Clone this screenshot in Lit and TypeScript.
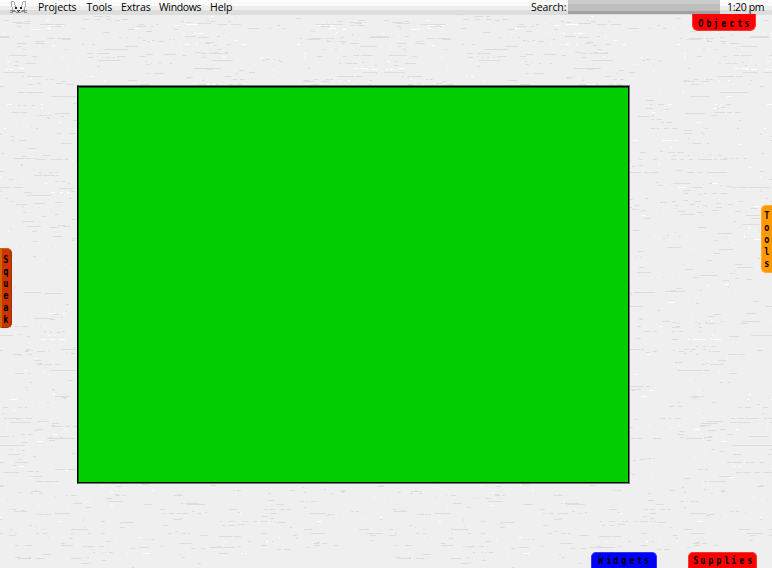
import { LitElement, html, css, svg } from "lit";
import { customElement, property } from "lit/decorators.js";

type Patch = { ox: number; oy: number; gray: string; white: string };

// Fibres of the paper tile: "x y length" on a grid three times finer than the screen.
const PATCHES: Patch[] = [
  { ox: 0, oy: 14,
    gray: "12 19 16,36 25 33,72 22 18,48 28 42,120 31 75,153 37 33,51 37 12,60 43 4,141 49 4,0 67 27,0 70 27,39 67 3,75 67 12,141 73 24,174 73 39,186 76 27,108 82 21,129 79 4,51 88 27,105 88 30,54 97 9,15 97 3,69 106 9,195 106 6,27 124 54,96 127 15,45 142 9,219 142 3,75 148 33,163 142 3,42 154 12,12 175 63,66 187 6,81 187 45,138 196 6,150 196 8,84 211 15,111 208 12,186 202 12,168 208 18,201 211 21,0 217 12,235 4 3,249 16 18,243 43 15,282 7 27,318 7 12,285 16 15,318 16 15,345 19 15,366 16 18,309 55 21,327 37 3,357 70 6,384 46 21,381 70 3,399 70 3,414 70 6,375 97 39,312 106 72,276 91 9,246 91 6,261 118 18,291 118 39,264 130 15,291 127 4,306 130 3,321 130 9,339 130 6,351 127 27,297 139 63,291 157 9,420 127 18,438 121 21,435 142 6,453 148 3,438 151 9,477 148 7,510 148 6,438 178 9,462 178 30,384 199 27,417 31 15,411 37 27,453 37 9,468 31 9,438 52 18,429 79 9,441 82 9,456 79 9,474 82 18,507 76 3,519 76 6,522 46 12,555 67 33,594 70 33,543 22 9,558 25 16,594 28 39,621 19 6,633 22 15,651 31 30,684 22 9,693 31 30,705 10 3,651 67 9,666 58 3,744 43 33,618 85 24,615 88 15,639 94 12,678 91 15,651 106 15,585 115 18,603 118 18,627 118 57,642 115 12,675 115 9,492 121 36,546 124 12,606 130 12,636 139 63,582 163 81,621 166 18,558 190 21,561 193 6,606 199 6,609 193 3,675 187 18,708 178 6,717 169 15,747 175 18,699 196 12,720 196 12,420 211 30,597 211 21,648 211 6,687 211 12,711 211 15",
    white: "138 19 9,144 34 21,183 34 9,93 46 27,141 43 12,9 58 6,33 58 3,156 94 9,33 130 3,21 142 9,183 130 6,57 163 15,18 166 6,30 166 9,201 166 3,90 193 6,162 208 3,258 187 4,273 187 9,312 199 3,405 43 9,417 43 3,402 109 3,420 94 3,495 28 3,525 34 12,557 31 37,549 58 6,582 58 7,594 58 15,513 91 3,540 91 3,555 91 11,588 91 6,543 112 3,633 7 9,675 67 3,702 79 9,726 91 12,669 127 6,762 151 3,774 151 3,621 211 9,639 211 6" },
  { ox: 260, oy: 14,
    gray: "108 13 15,51 34 9,27 43 6,69 43 9,114 43 3,153 52 12,168 31 81,180 37 30,201 25 3,213 25 3,231 22 18,270 25 15,288 25 18,282 28 24,294 19 21,315 25 6,270 34 15,294 34 18,315 40 3,120 73 6,147 73 42,141 76 39,198 73 9,210 73 12,201 79 6,201 82 15,240 82 18,240 70 12,276 61 3,276 64 3,294 64 3,246 88 9,270 88 27,327 70 33,333 67 27,189 106 6,225 106 6,288 103 3,300 97 51,171 127 15,249 127 12,282 124 15,303 124 33,18 136 12,42 136 3,6 139 9,54 139 6,60 142 6,39 154 3,144 163 6,237 148 6,258 148 18,279 148 12,306 145 6,315 154 6,345 154 6,309 175 42,348 178 3,231 187 24,258 187 24,288 187 6,297 187 6,147 193 3,132 199 15,183 202 24,201 196 6,210 196 9,255 199 3,330 199 6,153 211 24,279 211 3,327 211 6",
    white: "174 34 12,195 34 6,210 34 12,207 43 21,246 46 12,228 55 6,225 61 3,111 91 9,132 118 6,3 130 6,132 130 6,333 142 3,39 166 3,285 163 9,303 163 21,318 166 9,333 166 18,39 187 3,237 199 3" },
  { ox: 0, oy: 85,
    gray: "54 22 21,78 22 51,93 26 3,156 34 75,183 43 3,198 54 3,54 61 9,69 61 9,96 61 9,219 56 12,36 82 21,60 82 21,39 79 3,165 85 45,111 91 6,120 91 9,132 91 9,147 91 6,141 97 6,144 100 6,183 94 9,219 106 12,57 121 3,93 124 3,108 130 6,0 145 3,0 148 6,171 145 12,207 145 21,213 136 6,33 154 9,33 166 9,57 166 21,183 175 33,84 190 24,3 205 9,129 211 24,66 214 15,42 220 33,78 220 15,99 220 12,111 223 24,153 223 36,195 223 9,198 220 3,57 238 12,63 241 6,0 259 12,114 262 12,147 262 12,165 262 9,102 271 24,129 271 36,168 271 9,27 283 12,51 289 3,165 289 9,183 289 12,204 295 6,0 307 30,39 307 30,177 310 42,0 319 3,72 322 18,90 325 6,213 319 9,195 322 9,81 331 72,18 340 6,144 343 3,207 340 9,165 352 24,33 349 9,105 355 30",
    white: "21 58 15,123 58 6,123 70 6,177 112 6,12 130 6,216 226 3,57 238 3,0 274 3,135 295 6,153 322 12,180 322 9,198 322 9" },
  { ox: 230, oy: 14,
    gray: "108 259 24,120 271 6,144 271 18,108 283 21,84 307 33,123 304 9,153 289 3,162 286 15,123 316 12,141 316 15,153 325 9,168 325 18,123 343 12,141 343 6,162 343 12,186 343 18,222 349 24,222 358 24,234 373 6,246 388 27,291 388 6,240 247 60,330 235 84,219 202 36,252 196 12,288 196 9,225 298 60,303 304 18,315 295 30,351 295 15,375 295 15,321 283 6,333 280 15,348 271 15,285 343 9,273 355 6,279 361 6,381 343 6,387 319 6,321 187 51,378 187 21,90 415 18,150 412 9,174 415 21,201 415 21,186 424 12,60 439 3,87 436 12,129 436 12,183 436 15,210 436 12,237 436 12,264 436 42,312 436 9,330 436 21,342 433 12,363 433 9,378 433 6,402 433 9,234 424 6,279 418 3,297 421 6,324 424 12,66 457 9,87 454 12,60 475 33,102 475 15,123 475 21,231 475 21,264 475 12,291 475 60,198 469 18,189 508 51,138 505 6,144 514 15,219 529 24,246 520 30,279 511 3,297 508 9,330 514 6,351 517 15,366 520 15,387 520 24,417 520 60,105 553 9,150 565 21,186 562 12,222 559 12,255 562 18,222 538 12,264 541 9,282 538 9,306 538 15,333 538 18,195 574 9,240 571 15,261 577 6,279 574 12,318 568 15,354 571 15,384 562 15,60 556 9,75 574 12,93 589 15,204 592 24,261 595 18,306 589 21,375 592 18",
    white: "147 235 3,216 235 6,174 271 12,315 271 6,333 271 3,351 247 15,126 295 12,162 289 3,309 283 12,345 283 3,261 325 9,273 325 3,69 379 15,156 379 30,195 379 9,180 400 6,144 451 6,204 520 21,165 511 3,306 508 18,333 511 3,417 460 6,387 391 9,156 532 3,327 556 3,354 199 6,369 211 3" },
  { ox: 220, oy: 320,
    gray: "216 7 15,234 10 6,285 7 6,294 10 9,315 7 6,318 10 27,363 4 6,426 4 88,420 10 24,111 19 12,132 34 18,160 34 12,216 22 24,216 34 9,237 34 12,297 22 9,297 34 6,345 34 3,108 55 15,216 58 18,387 49 30,453 46 60,270 70 3,288 79 6,309 79 9,336 79 12,90 88 30,123 88 9,252 88 15,273 88 15,309 88 9,138 97 12,159 94 12,219 91 6,237 94 15,252 100 9,270 94 6,327 94 6,336 94 24,288 103 6,384 103 27,414 103 21,471 91 18,354 121 24,225 127 9,237 127 9,318 130 6,306 133 9,330 133 24,357 133 15,234 151 75,312 151 18,387 160 24,285 178 3,360 187 9,384 187 6,90 199 39,138 199 12,93 208 30,96 211 9,309 211 3,273 229 30,279 232 12,282 235 3,305 229 6,234 247 6,336 247 12,207 259 15,217 256 3,234 259 12,309 280 3,417 262 9,435 262 18,471 253 15,180 295 18,207 295 6,225 295 18,321 304 48,303 310 51,300 316 30,300 319 15,393 295 12,411 295 21,435 295 42,390 307 60,105 298 9,162 316 3,195 322 3,90 322 9,360 328 18,237 334 15,234 343 18,240 352 9,258 355 48,312 352 24,324 349 12,321 361 12,324 331 24,381 343 18,447 349 60,93 355 12,108 355 18,159 355 24,396 376 120,336 388 9,330 400 3,360 394 12,378 403 3,399 403 24,99 421 9,120 418 18,141 415 12,159 415 6,267 412 3,381 427 12,396 427 30,438 427 9,450 427 12,294 448 15,315 448 9,90 457 3,96 463 9,252 475 18,312 484 9,327 484 24,357 469 39,354 484 24,408 457 18,429 457 24,462 457 27,471 499 18,39 511 6,51 511 12,144 520 9,210 511 15,246 502 6,252 517 6,312 508 6,333 520 6,363 511 12,363 514 12,366 517 6,144 541 18,168 553 24,240 544 12,261 544 3,273 544 12,288 544 6,27 568 24,132 568 12,150 568 15,180 568 15,201 568 12,252 562 6,393 574 9,408 574 9,54 577 6,126 589 15,150 580 18,270 580 48,324 583 18,318 586 9,360 589 3,435 577 3,0 604 6,27 604 15,45 604 3,66 604 6,75 604 9,102 604 9,120 604 24,150 595 12,153 604 3,162 604 6,171 607 27,6 616 9,33 616 12,54 613 18,123 640 18,210 622 6,252 628 24,273 640 42,219 646 12,417 628 33,441 640 48,450 646 18,0 649 36,42 649 21,84 664 9,132 664 6,156 664 6,279 670 18,288 667 12,306 670 15,228 655 6,450 661 9,0 682 45,54 679 9,123 676 18,171 688 12,192 688 18,261 682 9,282 676 18,342 676 12",
    white: "177 19 9,306 19 3,336 46 3,264 58 6,279 58 36,333 55 3,339 58 24,396 67 3,435 55 3,141 103 12,381 115 3,126 139 3,222 139 3,234 139 3,105 163 9,357 157 3,126 187 3,150 211 9,123 229 18,294 223 6,444 223 9,441 238 6,282 328 18,234 316 3,303 340 3,321 340 3,345 340 3,408 328 9,366 364 15,399 439 6,417 439 6,387 472 12,156 460 3,162 499 3,309 496 3,321 496 3,459 532 6,60 580 6,291 604 15,15 664 6,135 664 9,177 652 3,231 661 3" },
  { ox: 0, oy: 330,
    gray: "0 16 39,57 13 9,80 19 9,132 4 6,150 7 6,171 7 12,186 4 9,0 61 9,78 58 12,78 61 9,75 64 12,93 61 6,111 64 24,144 64 3,39 73 24,60 76 6,84 73 12,183 58 45,201 67 3,213 70 12,219 52 9,102 91 21,108 100 18,114 103 15,135 103 21,165 103 9,177 103 6,45 130 27,84 130 9,153 121 78,90 157 6,75 172 6,81 181 3,204 151 15,156 178 6,159 181 6,165 199 45,186 202 15,192 205 6,105 217 3,141 217 6,9 232 15,54 232 9,75 232 6,6 250 6,12 265 9,24 265 45,48 268 9,75 265 21,126 265 3,30 277 63,114 274 33,156 280 21,153 286 12,153 289 24,171 289 18,198 289 12,219 289 12,102 301 9,111 298 18,63 313 12,84 313 15,0 319 27,39 319 3,63 337 21,147 322 12,141 325 84,177 322 12,147 331 18,0 346 75,27 358 12,66 361 9,99 379 9,24 373 36,54 388 12,0 397 12,45 397 39,39 406 9,12 427 45,84 424 18,108 424 9,87 439 39,108 454 21,135 454 24,162 454 15,216 370 9,165 418 30,201 418 27,0 466 9,0 469 12,54 487 9,93 484 33,90 490 9,117 490 12,105 481 6,165 499 3,198 496 3,213 496 6,219 520 27,21 508 3,36 538 12,42 544 39,64 541 9,99 526 3,111 553 6,120 553 12,135 553 9,147 553 6,165 550 45,0 568 6,87 586 9,105 592 3,27 598 12,129 598 6,213 598 51,0 610 9,45 610 6,108 610 9,129 610 12,213 610 6,27 616 21,144 622 3,183 640 12,45 646 9,75 646 21,183 646 36,87 655 3,129 673 24,45 682 15,54 685 39,87 682 6,108 685 24,213 685 9,219 685 24,243 700 24",
    white: "144 16 3,165 16 3,123 28 15,150 28 14,177 28 18,87 37 3,198 52 3,105 85 9,75 121 6,129 127 6,144 133 3,39 193 3,33 208 18,39 241 6,159 193 6,21 298 3,147 295 3,159 313 12,192 298 6,111 334 18,57 409 15,33 415 3,90 442 9,198 421 6,162 466 3,201 538 3,0 562 6,174 574 9" },
  { ox: 60, oy: 460,
    gray: "168 79 15,246 73 21,33 106 15,165 103 12,165 106 15,186 106 9,102 115 3,114 115 3,138 115 18,144 124 45,39 130 27,78 142 15,252 133 24,342 106 27,354 103 9,375 130 42,381 133 54,363 130 6,300 148 15,309 160 6,327 160 15,351 160 33,396 154 9,414 160 9,435 157 6,507 148 24,519 91 6,531 91 12,450 76 18,69 178 3,69 181 3,123 184 12,183 187 39,180 190 6,33 208 51,72 199 3,180 202 15,84 220 9,123 220 12,27 235 12,309 196 15,342 178 21,360 175 9,345 214 9,324 220 12,363 220 15,384 220 6,138 244 15,69 259 9,81 259 24,117 259 15,141 259 3,90 262 3,98 277 6,126 277 3,135 277 3,147 277 12,255 238 3,264 238 3,276 238 6,237 262 30,303 259 6,213 265 12,360 250 36,420 226 24,393 265 12,423 265 15,450 262 75,471 259 12,477 280 27,39 295 24,63 310 24,126 301 12,90 307 3,81 292 6,216 322 6,357 283 6,366 292 9,414 310 9,477 229 12,519 229 24,534 193 21,486 196 9,507 196 12",
    white: "123 76 6,240 76 3,153 97 6,276 91 6,78 124 3,150 136 9,168 238 3,237 232 9,248 280 22,201 280 3,290 280 4,438 283 3,495 244 6,540 160 6,546 280 3,555 280 6" },
];

// Stretch between the traced bands, sprinkled evenly by a small generator.
function sprinkle(): { gray: string; white: string } {
  let seed = 7321;
  const next = () => (seed = (seed * 16807) % 2147483647) / 2147483647;
  let gray = "", white = "";
  for (let i = 0; i < 310; i++) {
    const x = Math.floor(next() * 380);
    const y = 204 + Math.floor(next() * 124);
    const n = next();
    const w = n < 0.35 ? 1 : n < 0.85 ? 2 + Math.floor(next() * 7) : 9 + Math.floor(next() * 14);
    if (next() < 0.14) white += `M${x} ${y}h${Math.min(w, 7)}v1h-${Math.min(w, 7)}z`;
    else gray += `M${x} ${y}h${w}v1h-${w}z`;
  }
  return { gray, white };
}

function trace(p: Patch, list: string): string {
  return list.split(",").map((s) => {
    const [x, y, w] = s.split(" ").map(Number);
    const px = p.ox + Math.round(x / 3);
    const py = p.oy + Math.floor(y / 3);
    const pw = Math.max(1, Math.round(w / 3));
    return px >= 380 ? "" : `M${px} ${py}h${pw}v1h-${pw}z`;
  }).join("");
}

const extra = sprinkle();
const GRAY = PATCHES.map((p) => trace(p, p.gray)).join("") + extra.gray;
const WHITE = PATCHES.map((p) => trace(p, p.white)).join("") + extra.white;

@customElement("paper-sheet")
export class PaperSheet extends LitElement {
  static styles = css`
    :host { display: block; }
    svg { display: block; width: 100%; height: 100%; }
  `;
  render() {
    return html`<svg width="772" height="568" shape-rendering="crispEdges">
      ${svg`<defs><pattern id="tile" width="380" height="568" patternUnits="userSpaceOnUse">
        <path d=${GRAY} fill="#dddddd"></path><path d=${WHITE} fill="#fff"></path>
      </pattern></defs>
      <rect width="772" height="568" fill="#efefef"></rect>
      <rect width="772" height="568" fill="url(#tile)"></rect>`}
    </svg>`;
  }
}

@customElement("flap-tab")
export class FlapTab extends LitElement {
  @property() label = "";
  static styles = css`
    :host {
      display: flex; box-sizing: border-box; justify-content: center; align-items: center;
      font: bold 10px/12px "DejaVu Sans Mono", monospace; color: #000;
    }
    .letter { display: block; width: 7.7px; text-align: center; transform: scaleX(0.85); }
    :host([upright]) { flex-direction: column; }
    :host([upright]) .letter { height: 12px; }
  `;
  render() {
    return [...this.label].map((c) => html`<span class="letter">${c}</span>`);
  }
}

@customElement("app-root")
export class AppRoot extends LitElement {
  static styles = css`
    :host {
      display: block; position: relative; width: 772px; height: 568px; overflow: hidden;
      font: 10.5px/14px "Open Sans", "Noto Sans", sans-serif; color: #000;
    }
    .paper { position: absolute; inset: 0; }
    .bar {
      position: relative; display: flex; box-sizing: border-box; height: 15px; padding-left: 9px;
      background: linear-gradient(#fbfbfb 0 6px, #eeeeee 6px 10px, #dddddd 10px 15px);
    }
    .mouse { width: 19px; height: 14px; margin-right: 10px; flex: none; }
    .menu { white-space: nowrap; flex: none; letter-spacing: -0.1px; }
    .projects { width: 48.5px; }
    .tools { width: 34.5px; }
    .extras { width: 38px; }
    .windows { width: 51px; letter-spacing: -0.35px; }
    .help { flex: 1; }
    .search { width: 37px; }
    .field {
      width: 152px; height: 14px; flex: none;
      background: linear-gradient(#cccccc 0 4px, #bebebe 4px 11px, #a2a2a2 11px 14px);
    }
    .clock { width: 45px; margin-left: 7px; letter-spacing: -0.35px; }
    .project {
      position: absolute; left: 77px; top: 85px; width: 553px; height: 399px; box-sizing: border-box;
      background: #00ce00; border: 1px solid #777; border-left-color: #000;
      box-shadow: inset 0 1px #000, inset -1px -1px #000, inset 1px 2px #006800;
    }
    flap-tab { position: absolute; }
    .objects {
      left: 692px; top: 14px; width: 64px; height: 17px; background: #f00;
      border: 1px solid #ff3333; border-top: 0; border-radius: 0 0 6px 6px; padding-top: 3px;
    }
    .widgets {
      left: 591px; top: 552px; width: 66px; height: 16px; background: #00f;
      border: 1px solid #3333ff; border-bottom: 0; border-radius: 5px 5px 0 0; padding-top: 1px;
    }
    .supplies {
      left: 688px; top: 552px; width: 69px; height: 16px; background: #f00;
      border: 1px solid #ff3333; border-bottom: 0; border-radius: 5px 5px 0 0; padding-top: 1px;
    }
    .squeak {
      left: 0; top: 248px; width: 12px; height: 80px; background: #cc3300;
      border-style: solid; border-width: 1px 1px 1px 2px; border-color: #cc6600 #993300 #993300 #cc6600;
      border-radius: 0 5px 5px 0; padding: 3px 2px 0 0;
    }
    .toolbox {
      left: 761px; top: 205px; width: 11px; height: 68px; background: #ff9900;
      border: 1px solid #ffad33; border-right: 0; border-radius: 5px 0 0 5px; padding: 2px 1px 0 0;
    }
  `;
  render() {
    return html`
      <paper-sheet class="paper"></paper-sheet>
      <div class="bar">
        <svg class="mouse" viewBox="0 0 19 14" fill="none" shape-rendering="crispEdges">
          <path d="M2 1h3v1h-3zM14 1h3v1h-3zM2 2h1v5h-1zM5 2h1v3h-1zM13 2h1v3h-1zM16 2h1v5h-1zM6 5h1v2h-1zM12 5h1v2h-1zM3 7h1v3h-1zM15 7h1v3h-1z" fill="#aaa"></path>
          <path d="M1 10h5v1h-5zM13 10h5v1h-5zM3 11h4v1h-4zM12 11h4v1h-4zM1 12h3v1h-3zM15 12h3v1h-3zM7 12h5v1h-5z" fill="#888"></path>
          <path d="M6 7h2v2h-2zM11 7h2v2h-2zM8 10h3v1h-3zM9 11h1v1h-1z" fill="#222"></path>
          <path d="M9 10h1v1h-1z" fill="#d66"></path>
        </svg>
        <span class="menu projects">Projects</span>
        <span class="menu tools">Tools</span>
        <span class="menu extras">Extras</span>
        <span class="menu windows">Windows</span>
        <span class="menu help">Help</span>
        <span class="menu search">Search:</span>
        <div class="field"></div>
        <span class="menu clock">1:20 pm</span>
      </div>
      <div class="project"></div>
      <flap-tab class="objects" label="Objects"></flap-tab>
      <flap-tab class="toolbox" upright label="Tools"></flap-tab>
      <flap-tab class="squeak" upright label="Squeak"></flap-tab>
      <flap-tab class="widgets" label="Widgets"></flap-tab>
      <flap-tab class="supplies" label="Supplies"></flap-tab>
    `;
  }
}
